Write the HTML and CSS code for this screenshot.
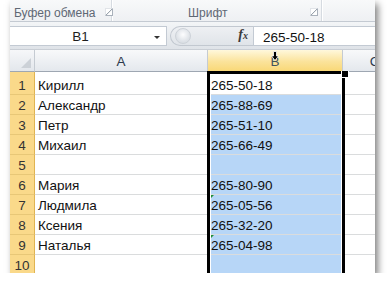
FILE: index.html
```html
<!DOCTYPE html>
<html lang="ru">
<head>
    <meta charset="UTF-8">
    <title>Excel</title>
    <link rel="stylesheet" href="styles.css">
</head>
<body>
    <div class="window">
        <div class="ribbon">
            <div class="group group-clipboard">
                <span class="group-label">Буфер обмена</span>
                <span class="launcher"></span>
            </div>
            <div class="group group-font">
                <span class="group-label">Шрифт</span>
                <span class="launcher"></span>
            </div>
        </div>

        <div class="formula-bar">
            <div class="name-box">
                <span class="name-value">B1</span>
                <span class="dropdown"></span>
            </div>
            <div class="splitter">
                <span class="knob"></span>
                <span class="fx"><i>f</i><i class="x">x</i></span>
            </div>
            <div class="formula-input">265-50-18</div>
        </div>

        <div class="sheet">
            <div class="grid">
                <div class="corner"><span class="corner-tri"></span></div>
                <div class="col-hdr">A</div>
                <div class="col-hdr active">B</div>
                <div class="col-hdr">C</div>

                <div class="row-hdr first">1</div>
                <div class="cell first">Кирилл</div>
                <div class="cell first b-col current">265-50-18</div>
                <div class="cell first"></div>

                <div class="row-hdr">2</div>
                <div class="cell">Александр</div>
                <div class="cell b-col sel">265-88-69</div>
                <div class="cell"></div>

                <div class="row-hdr">3</div>
                <div class="cell">Петр</div>
                <div class="cell b-col sel">265-51-10</div>
                <div class="cell"></div>

                <div class="row-hdr">4</div>
                <div class="cell">Михаил</div>
                <div class="cell b-col sel">265-66-49</div>
                <div class="cell"></div>

                <div class="row-hdr">5</div>
                <div class="cell"></div>
                <div class="cell b-col sel"></div>
                <div class="cell"></div>

                <div class="row-hdr">6</div>
                <div class="cell">Мария</div>
                <div class="cell b-col sel">265-80-90</div>
                <div class="cell"></div>

                <div class="row-hdr">7</div>
                <div class="cell">Людмила</div>
                <div class="cell b-col sel"><span class="err"></span>265-05-56</div>
                <div class="cell"></div>

                <div class="row-hdr">8</div>
                <div class="cell">Ксения</div>
                <div class="cell b-col sel">265-32-20</div>
                <div class="cell"></div>

                <div class="row-hdr">9</div>
                <div class="cell">Наталья</div>
                <div class="cell b-col sel"><span class="err"></span>265-04-98</div>
                <div class="cell"></div>

                <div class="row-hdr">10</div>
                <div class="cell"></div>
                <div class="cell b-col sel"></div>
                <div class="cell"></div>
            </div>

            <!-- selection frame and mouse cursor lie over the grid -->
            <div class="selection"></div>
            <div class="fill-handle"></div>
            <svg class="cursor" width="8" height="10" viewBox="0 0 8 10">
                <path d="M2.5 0.5 H5.5 V5 H7.5 L4 9.5 L0.5 5 H2.5 Z" fill="#000" stroke="#fff" stroke-width="0.8"/>
            </svg>
        </div>
    </div>
</body>
</html>
```

FILE: styles.css
```css
body {
    margin: 0;
    background-color: #fff;
    font-family: "Liberation Sans", Arial, sans-serif;
}
.window {
    margin-left: 10px;
    width: 365px;
    height: 273px;
    overflow: hidden;
    background-color: #fff;
    box-shadow: 3px 4px 7px rgba(0,0,0,0.5);
}

/* ribbon */
.ribbon {
    display: flex;
    height: 22px;
    box-sizing: border-box;
    background: linear-gradient(#f8f9fa, #eef0f3);
    border-bottom: 1px solid #c4cad2;
}
.group {
    display: flex;
    flex-shrink: 0;
    align-items: center;
    border-right: 1px solid #d6dbe1;
    box-shadow: 1px 0 0 #fff;
}
.group-clipboard {
    width: 102px;
    box-sizing: border-box;
    padding-left: 4px;
}
.group-font {
    width: 210px;
    box-sizing: border-box;
    padding-left: 76px;
}
.group-label {
    font-size: 12px;
    color: #5f6874;
    padding-top: 4px;
    white-space: nowrap;
}
.group-clipboard .launcher {
    margin-left: 9px;
}
.group-font .launcher {
    margin-left: 83px;
}
.launcher {
    flex-shrink: 0;
    width: 6px;
    height: 6px;
    margin-top: 3px;
    border: 1px solid #a9b1bb;
    border-left-color: #e1e4e8;
    border-top-color: #e1e4e8;
    background: linear-gradient(135deg, #fff 45%, #9aa3ad 50%, #fff 60%);
}

/* formula bar */
.formula-bar {
    display: flex;
    height: 28px;
    box-sizing: border-box;
    padding: 4px 0 3px 0;
    background: linear-gradient(#f3f5f7, #dfe3e8);
    border-bottom: 1px solid #c9ced5;
}
.name-box {
    position: relative;
    width: 157px;
    box-sizing: border-box;
    background-color: #fff;
    border: 1px solid #c3cad3;
    border-left: none;
    display: flex;
    align-items: center;
    justify-content: center;
}
.name-value {
    font-size: 13.5px;
    color: #1d1d1d;
    margin-right: 15px;
}
.dropdown {
    position: absolute;
    right: 6px;
    top: 9px;
    width: 0;
    height: 0;
    border-left: 3px solid transparent;
    border-right: 3px solid transparent;
    border-top: 3px solid #333;
}
.splitter {
    width: 83px;
    margin-left: 3px;
    box-sizing: border-box;
    display: flex;
    align-items: center;
    justify-content: space-between;
    padding: 0 5px 0 4px;
    background: linear-gradient(#eef0f3, #e0e4e9);
    border: 1px solid #c2c8d0;
    border-right: none;
    border-radius: 11px 0 0 11px;
}
.knob {
    width: 14px;
    height: 14px;
    border-radius: 50%;
    border: 1px solid #cdd2d8;
    background: radial-gradient(circle at 50% 40%, #fdfdfe 0, #dfe3e8 60%, #d2d7dd 100%);
}
.fx {
    font-family: "Liberation Serif", serif;
    font-weight: bold;
    font-size: 14px;
    color: #3a3a3a;
    padding-bottom: 2px;
}
.fx .x {
    font-size: 10px;
}
.formula-input {
    flex: 1;
    background-color: #fff;
    border: 1px solid #c3cad3;
    border-right: none;
    font-size: 13.5px;
    color: #111;
    padding: 3px 0 0 9px;
}

/* sheet */
.sheet {
    position: relative;
}
.grid {
    display: grid;
    grid-template-columns: 25px 173px 135px 64px;
    grid-template-rows: 22px 23px repeat(9, 20px);
    font-size: 13.5px;
}
.grid > div {
    box-sizing: border-box;
    border-right: 1px solid #dadcdd;
    border-bottom: 1px solid #dadcdd;
}
.corner {
    position: relative;
    background: linear-gradient(#f6f7f9, #e3e7ec);
    border-right-color: #c5cbd2 !important;
    border-bottom-color: #9ea7b2 !important;
}
.corner-tri {
    position: absolute;
    right: 3px;
    bottom: 3px;
    width: 0;
    height: 0;
    border-left: 10px solid transparent;
    border-bottom: 10px solid #ccd1d7;
}
.col-hdr {
    display: flex;
    align-items: center;
    justify-content: center;
    padding-top: 2px;
    color: #2c3a4c;
    background: linear-gradient(#f8f9fa, #e4e8ed);
    border-right-color: #c5cbd2 !important;
    border-bottom-color: #9ea7b2 !important;
}
.col-hdr.active {
    color: #41545c;
    background: linear-gradient(#fff8dc, #fbe39b 55%, #f9d877);
    border-bottom-color: #c9a24a !important;
}
.row-hdr {
    display: flex;
    align-items: flex-end;
    justify-content: center;
    padding-bottom: 1px;
    color: #333;
    background-color: #fad98a;
    border-right-color: #e0b452 !important;
    border-bottom-color: #e8c777 !important;
}
.cell {
    position: relative;
    display: flex;
    align-items: flex-end;
    padding: 0 0 1px 3px;
    color: #111;
    white-space: nowrap;
}
.b-col {
    padding-left: 3px;
}
.cell.sel {
    background-color: #b7d6f7;
}
.err {
    position: absolute;
    left: 2px;
    top: 0;
    width: 0;
    height: 0;
    border-right: 4px solid transparent;
    border-top: 4px solid #1f8f3a;
}
.selection {
    position: absolute;
    left: 197px;
    top: 21px;
    width: 138px;
    height: 220px;
    box-sizing: border-box;
    border: 3px solid #000;
    box-shadow: inset 0 0 0 1px #fff;
}
.fill-handle {
    position: absolute;
    left: 331px;
    top: 21px;
    width: 6px;
    height: 6px;
    background-color: #000;
    border: 1px solid #fff;
    border-top: none;
}
.cursor {
    position: absolute;
    left: 261px;
    top: 1px;
}
```
